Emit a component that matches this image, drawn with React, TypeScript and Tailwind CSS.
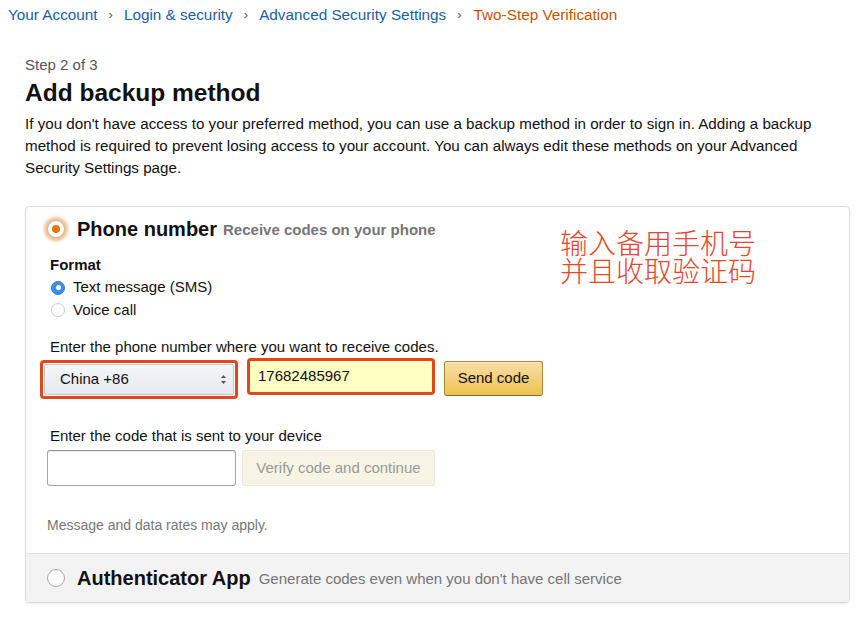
import React from "react";

const crumbs = ["Your Account", "Login & security", "Advanced Security Settings"];

function Chevrons() {
  return (
    <svg width="7" height="11" viewBox="0 0 7 11" className="text-[#555]">
      <path d="M3.5 1 L6 4 H1 Z" fill="currentColor" />
      <path d="M3.5 10 L6 7 H1 Z" fill="currentColor" />
    </svg>
  );
}

export default function App() {
  return (
    <div className="relative w-[865px] h-[628px] bg-white text-[#111] font-['Liberation_Sans',Arial,sans-serif] overflow-hidden">
      {/* breadcrumb */}
      <nav className="h-[30px] pl-[8px] flex items-center gap-[11px] text-[15.3px] leading-[20px]">
        {crumbs.map((c) => (
          <React.Fragment key={c}>
            <a className="text-[#1a5ea6]">{c}</a>
            <span className="text-[#555] text-[13px]">›</span>
          </React.Fragment>
        ))}
        <span className="text-[#c45500] ml-[1px]">Two-Step Verification</span>
      </nav>

      <div className="pl-[25px] w-[850px]">
        <p className="mt-[25px] text-[15px] leading-[20px] text-[#555]">Step 2 of 3</p>
        <h1 className="mt-[3px] text-[24.5px] leading-[30px] font-bold">Add backup method</h1>
        <p className="mt-[5px] text-[15.2px] leading-[22px]">
          If you don't have access to your preferred method, you can use a backup method in order to sign in. Adding a backup
          <br />
          method is required to prevent losing access to your account. You can always edit these methods on your Advanced
          <br />
          Security Settings page.
        </p>

        {/* options box */}
        <div className="mt-[27px] border border-[#ddd] rounded-[4px] shadow-[0_1px_2px_rgba(0,0,0,0.08)] overflow-hidden">
          <div className="px-[22px] pt-[7px] pb-[18px]">
            <div className="h-[30px] flex items-center gap-[12px] -ml-px">
              <span className="w-[18px] h-[18px] rounded-full border border-[#b9b9b9] bg-white flex items-center justify-center shadow-[0_0_3px_3px_rgba(232,132,40,0.5)]">
                <span className="w-[8px] h-[8px] rounded-full bg-[#e47911]" />
              </span>
              <span className="text-[20px] font-bold leading-[30px]">Phone number</span>
              <span className="text-[15px] font-bold text-[#767676] -ml-[6px] mt-[3px]">Receive codes on your phone</span>
            </div>

            <p className="mt-[10px] ml-[2px] text-[15px] leading-[22px] font-bold">Format</p>
            <div className="ml-[3px] h-[23px] flex items-center gap-[8px] text-[15px]">
              <span className="w-[14px] h-[14px] rounded-full bg-[#3b8fe6] border border-[#2f7fd6] flex items-center justify-center">
                <span className="w-[5px] h-[5px] rounded-full bg-white" />
              </span>
              <span>Text message (SMS)</span>
            </div>
            <div className="ml-[3px] h-[22px] flex items-center gap-[8px] text-[15px]">
              <span className="w-[14px] h-[14px] rounded-full bg-white border border-[#cfcfcf]" />
              <span>Voice call</span>
            </div>

            <p className="mt-[16px] ml-[2px] text-[15px] leading-[20px]">Enter the phone number where you want to receive codes.</p>
            <div className="mt-[1px] -ml-[8px] flex items-start h-[41px]">
              <div className="mt-[2px] w-[198px] h-[39px] border-[3px] border-[#e2461e] rounded-[4px] p-px">
                <div className="h-full rounded-[2px] border border-[#c8c8c8] bg-gradient-to-b from-[#f4f6f9] to-[#e6e9ee] flex items-center justify-between pl-[15px] pr-[6px] text-[15px]">
                  <span>China +86</span>
                  <Chevrons />
                </div>
              </div>
              <div className="ml-[9px] w-[188px] h-[37px] border-[3px] border-[#e2461e] rounded-[4px] bg-[#ffffc4] flex items-center pl-[8px] text-[15px]">
                17682485967
              </div>
              <button className="ml-[9px] mt-[3px] w-[99px] h-[35px] rounded-[3px] border border-[#a88734] border-b-[#846a29] bg-gradient-to-b from-[#f7dfa5] to-[#f0c14b] text-[15px] text-[#111] shadow-[inset_0_1px_0_rgba(255,255,255,0.4)]">
                Send code
              </button>
            </div>

            <p className="mt-[27px] ml-[2px] text-[15px] leading-[20px]">Enter the code that is sent to your device</p>
            <div className="mt-[4px] -ml-px flex items-center gap-[6px]">
              <div className="w-[189px] h-[36px] rounded-[3px] border border-[#a6a6a6] border-t-[#949494] bg-white shadow-[inset_0_1px_0_rgba(0,0,0,0.07)]" />
              <div className="w-[193px] h-[36px] rounded-[2px] bg-[#f7f3e5] border border-[#efe9d5] flex items-center justify-center text-[15px] text-[#9a9a9a]">
                Verify code and continue
              </div>
            </div>

            <p className="mt-[29px] -ml-px text-[14px] leading-[20px] text-[#777]">Message and data rates may apply.</p>
          </div>

          <div className="h-[49px] bg-[#f3f3f3] border-t border-[#e1e1e1] px-[22px] flex items-center gap-[12px]">
            <span className="-ml-px w-[18px] h-[18px] rounded-full border border-[#a9a9a9] bg-white" />
            <span className="text-[20px] font-bold">Authenticator App</span>
            <span className="text-[15px] text-[#767676] -ml-[4px] mt-[3px]">Generate codes even when you don't have cell service</span>
          </div>
        </div>
      </div>

      {/* annotation */}
      <div className="absolute left-[560px] top-[228px] text-[28px] leading-[28px] text-[#e4472c] font-['Noto_Sans_CJK_SC',sans-serif] font-light">
        <p>输入备用手机号</p>
        <p>并且收取验证码</p>
      </div>
    </div>
  );
}
